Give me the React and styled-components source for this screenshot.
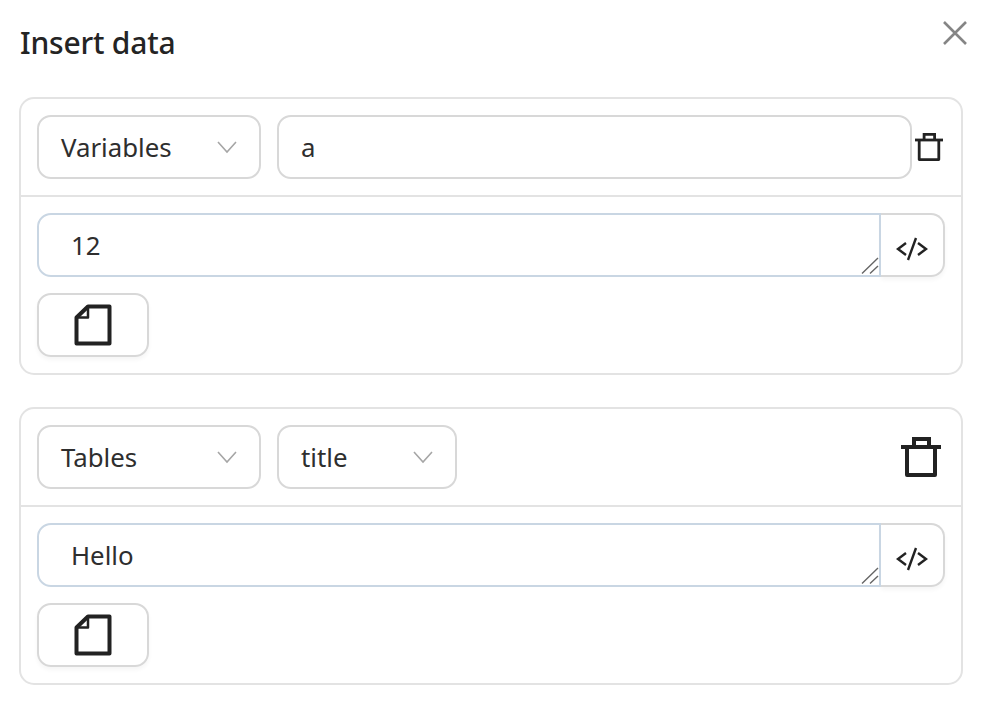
import React from 'react';
import styled, { createGlobalStyle } from 'styled-components';

const GlobalStyle = createGlobalStyle`
  html, body {
    margin: 0;
    padding: 0;
    background: #fff;
    color: #242424;
    font-family: "Noto Sans", "Open Sans", sans-serif;
  }
`;

const Page = styled.div`
  width: 989px;
  height: 702px;
  box-sizing: border-box;
  padding: 0 26px 0 19px;
  overflow: hidden;
`;

const Header = styled.div`
  display: flex;
  justify-content: space-between;
  align-items: flex-start;
  height: 97px;
`;

const Title = styled.h1`
  margin: 22px 0 0 1px;
  font-size: 30px;
  line-height: 42px;
  font-weight: 500;
  letter-spacing: -0.2px;
`;

const CloseButton = styled.div`
  display: flex;
  margin: 21px -4px 0 0;
  color: #858585;
`;

const Card = styled.div`
  box-sizing: border-box;
  border: 2px solid #e3e3e3;
  border-radius: 15px;
  height: 278px;
  & + & {
    margin-top: 32px;
  }
`;

const TopRow = styled.div`
  display: flex;
  align-items: center;
  gap: 16px;
  box-sizing: border-box;
  height: 98px;
  padding: 16px;
  border-bottom: 2px solid #e3e3e3;
`;

const Field = styled.div`
  box-sizing: border-box;
  display: flex;
  align-items: center;
  justify-content: space-between;
  width: ${(p) => p.$width || 'auto'};
  flex: ${(p) => (p.$grow ? '1 1 0' : '0 0 auto')};
  height: 64px;
  padding: 0 21px 0 22px;
  border: 2px solid #d8d8d8;
  border-radius: 14px;
  font-size: 25.800px;
  color: #2e2e2e;
`;

const Chevron = styled.svg`
  display: block;
  width: 22px;
  height: 14px;
  margin-top: -1px;
  color: #a6a6a6;
`;

const TrashButton = styled.div`
  display: flex;
  flex: 0 0 auto;
  margin-left: ${(p) => (p.$pushed ? 'auto' : '-13px')};
  margin-right: ${(p) => (p.$pushed ? '4px' : '2px')};
`;

const Body = styled.div`
  display: flex;
  flex-direction: column;
  align-items: flex-start;
  gap: 16px;
  padding: 16px;
`;

const CodeRow = styled.div`
  display: flex;
  align-self: stretch;
  height: 64px;
`;

const CodeInput = styled.div`
  position: relative;
  flex: 1;
  box-sizing: border-box;
  display: flex;
  align-items: center;
  padding: 0 32px;
  border: 2px solid #c9d6e3;
  border-radius: 14px 0 0 14px;
  font-size: 25.800px;
  color: #2e2e2e;
`;

const ResizeHandle = styled.svg`
  position: absolute;
  right: 0;
  bottom: 0;
  width: 20px;
  height: 18px;
  color: #666;
`;

const CodeButton = styled.div`
  box-sizing: border-box;
  width: 64px;
  display: flex;
  align-items: center;
  justify-content: center;
  padding-top: 8px;
  border: 2px solid #d8d8d8;
  border-left: 0;
  border-radius: 0 14px 14px 0;
  box-shadow: 0 3px 4px rgba(0, 0, 0, 0.04);
`;

const CopyButton = styled.div`
  box-sizing: border-box;
  width: 112px;
  height: 64px;
  display: flex;
  align-items: center;
  justify-content: center;
  border: 2px solid #d8d8d8;
  border-radius: 14px;
  box-shadow: 0 3px 4px rgba(0, 0, 0, 0.04);
`;

const ChevronIcon = () => (
  <Chevron viewBox="0 0 22 14" fill="none" stroke="currentColor" strokeWidth="1.6">
    <path d="M2 2l9 10 9-10" />
  </Chevron>
);

const CloseIcon = () => (
  <svg width="24" height="24" viewBox="0 0 24 24" fill="none" stroke="currentColor" strokeWidth="2.6">
    <path d="M1 1l22 22M23 1L1 23" />
  </svg>
);

const TrashIcon = ({ size }) => (
  <svg width={size} height={size} viewBox="0 0 40 40" fill="none" stroke="#222" strokeWidth="4">
    <path d="M0 10h40" />
    <path d="M13 10V2h15v8" />
    <path d="M6 10v28h28V10" strokeLinejoin="round" />
  </svg>
);

const CodeIcon = () => (
  <svg width="32" height="24" viewBox="0 0 32 24" fill="none" stroke="#222" strokeWidth="2.4">
    <path d="M10 6l-8 6 8 6M22 6l8 6-8 6M20 1l-8 22" />
  </svg>
);

const FileIcon = () => (
  <svg width="38" height="42" viewBox="0 0 38 42" fill="none" stroke="#222" strokeWidth="4" strokeLinejoin="round">
    <path d="M14 2.500h21.500v37h-33V13.500z" />
    <path d="M14 2.500v11h-11.500" strokeWidth="2.500" />
  </svg>
);

const ResizeIcon = () => (
  <ResizeHandle viewBox="0 0 20 18" fill="none" stroke="currentColor" strokeWidth="1.4">
    <path d="M3 16.500L19 1M11 16.500l8-7.500" />
  </ResizeHandle>
);

const CARDS = [
  { id: 1, kind: 'Variables', value: 'a', code: '12' },
  { id: 2, kind: 'Tables', column: 'title', code: 'Hello' },
];

const DataCard = ({ kind, value, column, code }) => (
  <Card>
    <TopRow>
      <Field $width="224px">
        {kind}
        <ChevronIcon />
      </Field>
      {column ? (
        <Field $width="180px">
          {column}
          <ChevronIcon />
        </Field>
      ) : (
        <Field $grow>{value}</Field>
      )}
      {column ? (
        <TrashButton $pushed>
          <TrashIcon size={40} />
        </TrashButton>
      ) : (
        <TrashButton>
          <TrashIcon size={28} />
        </TrashButton>
      )}
    </TopRow>
    <Body>
      <CodeRow>
        <CodeInput>
          {code}
          <ResizeIcon />
        </CodeInput>
        <CodeButton>
          <CodeIcon />
        </CodeButton>
      </CodeRow>
      <CopyButton>
        <FileIcon />
      </CopyButton>
    </Body>
  </Card>
);

const App = () => (
  <>
    <GlobalStyle />
    <Page>
      <Header>
        <Title>Insert data</Title>
        <CloseButton>
          <CloseIcon />
        </CloseButton>
      </Header>
      {CARDS.map((card) => (
        <DataCard key={card.id} {...card} />
      ))}
    </Page>
  </>
);

export default App;
